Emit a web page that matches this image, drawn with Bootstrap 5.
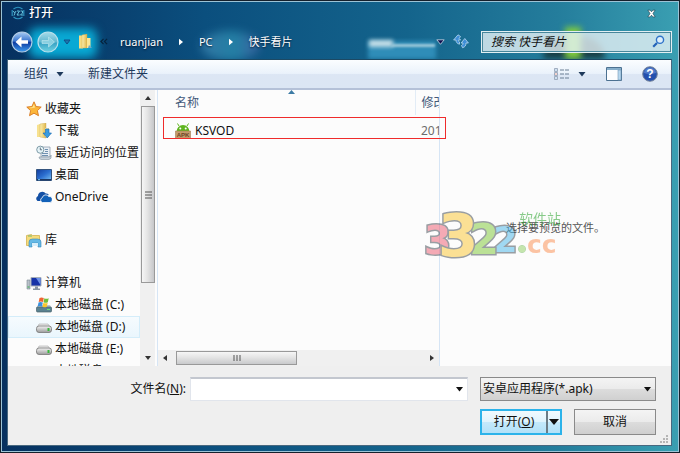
<!DOCTYPE html>
<html lang="zh-CN">
<head>
<meta charset="utf-8">
<meta name="viewport" content="width=device-width, initial-scale=1">
<title>打开</title>
<link href="https://cdn.jsdelivr.net/npm/bootstrap@5.3.0/dist/css/bootstrap.min.css" rel="stylesheet">
<style>
  body { font-family: "Noto Sans", "Noto Sans CJK SC", sans-serif; font-size: 12px; line-height: 16px; color: #111; background: #0b1420; }
  button, input, select { font: inherit; color: inherit; }
  svg { display: block; flex: none; }
  .plain { border: 0; background: none; padding: 0; }
  .dialog { border: 1px solid #15202c; background: linear-gradient(90deg, #06305f 0%, #0b4f7e 30%, #14648c 60%, #247d9c 82%, #3a9fb2 100%); }
  .frame { border: 1px solid #9cc3d6; padding: 0 6px 5px 5px; }
  .head { height: 57px; color: #fff; }
  .head > .layer { z-index: 1; }
  .title-row { height: 22px; }
  .title-row .name { font-size: 12px; font-weight: 500; text-shadow: 0 0 2px #02182f; }
  .path-row { height: 35px; }
  .crumb { color: #fff; font-size: 11px; text-decoration: none; text-shadow: 0 1px 2px #02182f; }
  .crumb-root { margin-left: 12px; }
  .glow { position: absolute; filter: blur(5px); }
  .glow-cyan { left: 22px; bottom: 1px; width: 68px; height: 30px; background: #08a9d4; border-radius: 8px; }
  .glow-ball { left: 194px; bottom: -2px; width: 58px; height: 30px; border-radius: 50%; background: linear-gradient(90deg, #4387b4, #2c93b4 60%, #5065ab); opacity: .7; }
  .glow-folder { left: 361px; bottom: 0; width: 68px; height: 18px; background: #2f8db8; filter: blur(2px); }
  .glow-tab { left: 362px; bottom: 12px; width: 24px; height: 7px; background: #c6dfe8; filter: blur(2px); }
  .glow-strip { left: 384px; bottom: 12px; width: 44px; height: 3px; background: #9cc7d8; filter: blur(1px); }
  .glow-dark { right: 67px; bottom: 0; width: 62px; height: 22px; background: #173e45; border-radius: 30px 30px 0 0; filter: blur(3px); }
  .glow-green { right: 91px; bottom: 0; width: 16px; height: 32px; background: #7fcb3e; filter: blur(3px); }
  .search { width: 191px; height: 22px; border: 1px solid #e2eff3; outline: 1px solid #47869b; outline-offset: -2px; background: rgba(231,242,246,.8); padding: 0 6px 0 9px; }
  .search input { border: 0; background: none; outline: 0; min-width: 0; color: #111; font-style: italic; padding: 0; }
  .search input::placeholder { color: #111; opacity: 1; }
  .inner { border: 1px solid #48687f; border-top-color: #1c4964; background: #efefef; }
  .tools { height: 30px; background: linear-gradient(#fbfdff 0, #eaf2fb 48%, #dce6f4 52%, #dbe6f4 100%); border-bottom: 2px solid #b4c1d8; color: #1e395b; padding: 0 13px 0 16px; gap: 20px; }
  .browse { background: #fcfcfc; flex: 1 1 0; min-height: 0; }
  .tree { width: 132px; padding-top: 8px; overflow: hidden; }
  .tree a { display: flex; align-items: center; gap: 3px; height: 22px; flex: none; padding-left: 27px; color: #111; text-decoration: none; white-space: nowrap; border: 1px solid transparent; }
  .tree a.group { padding-left: 17px; }
  .tree a.current { background: linear-gradient(#f6fbfe, #eaf6fd); border-color: #d4edfa; }
  .tree .space { height: 21px; flex: none; }
  .vbar { width: 17px; background: linear-gradient(90deg, #f0f0f0 15px, #fcfcfc 15px); padding: 0 2px 0 1px; }
  .vbar button, .hbar button { width: 14px; height: 16px; display: flex; align-items: center; justify-content: center; }
  .vthumb { height: 177px; border: 1px solid #999; background: linear-gradient(90deg, #f6f6f6, #e4e4e4 45%, #c6c7ca); }
  .vspace { flex: 1; }
  .files { width: 283px; border-left: 1px solid #d6e5f5; border-right: 1px solid #d6e5f5; }
  .scroller { flex: 1; overflow: hidden; }
  .files table { table-layout: fixed; width: 320px; }
  .files th { font-weight: 400; color: #43597a; height: 25px; padding: 0 6px 0 17px; }
  .files th + th, .files td + td { padding-left: 6px; }
  .files th + th { border-left: 1px solid #e2ecf6; }
  .files td { height: 32px; padding: 0 6px 0 17px; }
  .files td + td { color: #6d6d6d; }
  .sort { position: absolute; left: 130px; top: 0; }
  .marked { position: absolute; left: 5px; right: -7px; top: 27px; height: 22px; border: 1px solid #ef2b2b; z-index: 2; pointer-events: none; }
  .hbar { height: 16px; background: #f0f0f0; }
  .hthumb { width: 121px; height: 14px; border: 1px solid #999; background: linear-gradient(#f6f6f6, #e4e4e4 45%, #c9cacc); }
  .preview { color: #555; font-size: 11px; }
  .stamp { position: absolute; left: -18px; top: 112px; opacity: .5; pointer-events: none; }
  .foot { padding: 11px 15px 10px 16px; }
  .name-box { width: 278px; }
  .field { height: 24px; border: 1px solid #e1e5ec; border-top: 2px solid #c3c7cf; background: #fff; padding: 0 18px 0 4px; border-radius: 0; }
  .right-col { width: 176px; }
  .kind { height: 24px; appearance: none; border: 1px solid #8a8a8a; border-radius: 0; background: linear-gradient(#f4f4f4, #ebebeb 48%, #dcdcdc 52%, #d0d0d0); padding: 0 20px 0 2px; }
  .drop { position: absolute; right: 5px; top: 10px; pointer-events: none; }
  .act { height: 26px; }
  .accept { width: 82px; border: 2px solid #2cb3ea; background: linear-gradient(#f1fafe, #e0f4fd 48%, #c4e9fb 52%, #b2e1f8); }
  .accept .more { width: 14px; border-left: 2px solid #6b7c86; }
  .cancel { width: 82px; border: 1px solid #8a8a8a; background: linear-gradient(#f4f4f4, #ebebeb 48%, #dcdcdc 52%, #cfcfcf); }
  .grip { position: absolute; right: 2px; bottom: 1px; }
</style>
<script src="https://cdn.jsdelivr.net/npm/bootstrap@5.3.0/dist/js/bootstrap.bundle.min.js"></script>
</head>
<body>
<svg width="0" height="0" class="position-absolute" aria-hidden="true">
  <defs>
    <linearGradient id="gBlue" x2="0" y2="1"><stop stop-color="#a9cdf3"/><stop offset=".45" stop-color="#3b76cf"/><stop offset=".52" stop-color="#0c3aa0"/><stop offset="1" stop-color="#3d9df0"/></linearGradient>
    <linearGradient id="gTeal" x2="0" y2="1"><stop stop-color="#a7dbe9"/><stop offset=".5" stop-color="#5fb7d0"/><stop offset=".55" stop-color="#38a2c4"/><stop offset="1" stop-color="#71d4e4"/></linearGradient>
    <linearGradient id="gFolder"><stop stop-color="#fdf0ae"/><stop offset="1" stop-color="#dfb64c"/></linearGradient>
    <linearGradient id="gScreen" x2="1" y2="1"><stop stop-color="#123c9c"/><stop offset=".5" stop-color="#2b6ed0"/><stop offset="1" stop-color="#7cc2f4"/></linearGradient>
    <linearGradient id="gDisk" x2="0" y2="1"><stop stop-color="#f4f4f4"/><stop offset="1" stop-color="#9b9b9b"/></linearGradient>
    <symbol id="disk" viewBox="0 0 16 16"><path d="M3 5h9l3 4H1z" fill="#e9e9e9" stroke="#aaa" stroke-width=".6"/><rect x=".5" y="7" width="15" height="6.500" rx="2.500" fill="url(#gDisk)" stroke="#777" stroke-width=".8"/><rect x="11.500" y="9" width="2" height="3" fill="#39b83c"/></symbol>
  </defs>
</svg>

<div class="dialog min-vh-100 d-flex flex-column">
<div class="frame flex-grow-1 d-flex flex-column">
  <header class="head position-relative overflow-hidden">
    <span class="glow glow-cyan"></span><span class="glow glow-ball"></span><span class="glow glow-folder"></span><span class="glow glow-tab"></span><span class="glow glow-strip"></span><span class="glow glow-dark"></span><span class="glow glow-green"></span>
    <div class="layer position-relative title-row d-flex align-items-center ps-1 pe-3">
      <svg class="me-1" width="14" height="14" viewBox="0 0 13 14" fill="none" stroke="#2d92bd"><path d="M2 3Q6.500-.5 11 3M2 11q4.500 3.500 9 0M.7 4v6M12.300 4v6" stroke-width="1.200"/><path d="M1.800 5l1.400 2 1.400-2M3.500 7l-1 2.500M5.500 5H8L5.500 9H8M9 5h2v2L9 9h2.500" stroke="#65c2dc"/></svg>
      <span class="name flex-grow-1">打开</span>
      <button class="plain" type="button" aria-label="关闭"><svg width="9" height="9" viewBox="0 0 8 8"><path d="M.8 1h2l1.200 1.500L5.200 1h2L5.300 4l1.900 3h-2L4 5.500 2.800 7h-2l1.900-3z" fill="#fff" stroke="#183542" stroke-width=".5"/></svg></button>
    </div>
    <div class="layer position-relative path-row d-flex align-items-center ps-1">
      <button class="plain me-1" type="button" aria-label="后退"><svg width="22" height="22" viewBox="0 0 22 22"><circle cx="11" cy="11" r="10" fill="url(#gBlue)" stroke="#b4cde6" stroke-width="1.200"/><path d="M4.500 11l6-5.500v3.700H17v3.600h-6.500v3.700z" fill="#fff"/></svg></button>
      <button class="plain" type="button" aria-label="前进"><svg width="22" height="22" viewBox="0 0 22 22"><circle cx="11" cy="11" r="10" fill="url(#gTeal)" stroke="#b9e0ec" stroke-width="1.200"/><path d="M17.500 11l-6-5v3.500H5v3h6.500V16z" fill="#8bd0e1" stroke="#c2e9f0" stroke-width=".6"/></svg></button>
      <button class="plain ms-1 me-2" type="button" aria-label="最近的页面"><svg width="8" height="6" viewBox="0 0 8 6"><path d="M1 1h6L4 5z" fill="#1d78ad" stroke="#104f8c"/></svg></button>
      <svg width="13" height="15" viewBox="0 0 13 15"><path d="M0 1.500h4v13H0z" fill="#f6dd83"/><path d="M3 1l5-1v14H3z" fill="url(#gFolder)" stroke="#caa245" stroke-width=".4"/><path d="M8 4h3.500v10H8z" fill="#fbe697"/><path d="M10 11l3 3H9z" fill="#6fa5c7"/></svg>
      <svg class="ms-2" width="8" height="7" viewBox="0 0 9 8" fill="none" stroke="#06233d" stroke-width="1.400"><path d="M4 1L1 4l3 3M8 1L5 4l3 3"/></svg>
      <a class="crumb crumb-root" href="#">ruanjian</a>
      <svg class="mx-3" width="4" height="8" viewBox="0 0 5 8"><path d="M0 0l5 4-5 4z" fill="#fff"/></svg>
      <a class="crumb" href="#">PC</a>
      <svg class="mx-3" width="4" height="8" viewBox="0 0 5 8"><path d="M0 0l5 4-5 4z" fill="#fff"/></svg>
      <a class="crumb flex-grow-1" href="#">快手看片</a>
      <button class="plain me-2" type="button" aria-label="以前的位置"><svg width="9" height="6" viewBox="0 0 9 6"><path d="M.8.800h7.400L4.500 5.300z" fill="#10104f" stroke="#c9deea" stroke-width=".8"/></svg></button>
      <button class="plain me-2 pe-1" type="button" aria-label="刷新"><svg width="16" height="15" viewBox="0 0 16 15" fill="#3f8fd8" stroke="#b9d8f0" stroke-width=".8"><path d="M5 .8L.6 6H3c0 2.200 1 3.600 3.500 4.200V8C5.500 7.500 5.400 7 5.400 6h2.200L6.200 4.500 7.500 2.500z"/><path d="M11.800 4.500L8.200 9H10c0 1.500-.5 2-1.500 2.500l1 2.200c2.500-.5 3.500-2.200 3.500-4.700h2.400z"/></svg></button>
      <label class="search d-flex align-items-center"><input class="flex-grow-1" type="search" placeholder="搜索 快手看片" aria-label="搜索 快手看片"><svg width="13" height="13" viewBox="0 0 13 13" fill="none"><path d="M5 8L1.200 11.800" stroke="#2463b8" stroke-width="2.200"/><circle cx="8" cy="4.800" r="3.600" fill="#dceefa" stroke="#2f73c9" stroke-width="1.400"/></svg></label>
    </div>
  </header>

  <main class="inner flex-grow-1 d-flex flex-column">
    <div class="tools d-flex align-items-center">
      <button class="plain d-flex align-items-center gap-1 me-1" type="button">组织<svg class="ms-1" width="8" height="5" viewBox="0 0 7 5"><path d="M0 0h7L3.500 4.500z" fill="#1e395b"/></svg></button>
      <button class="plain me-auto" type="button">新建文件夹</button>
      <button class="plain d-flex align-items-center gap-2" type="button" aria-label="更改视图"><svg width="16" height="12" viewBox="0 0 16 12"><g fill="#fff" stroke="#8a9bb0" stroke-width=".8"><path d="M.5.500h3v3h-3zM.5 4.500h3v3h-3zM.5 8.500h3v3h-3z"/></g><path d="M1.500 2h1M1.500 10h1" stroke="#3c87c8"/><path d="M1.500 6h1" stroke="#d24a36"/><path d="M6 2h4m1 0h4M6 6h4m1 0h4M6 10h4m1 0h4" stroke="#6b7e94"/></svg><svg width="8" height="5" viewBox="0 0 7 5"><path d="M0 0h7L3.500 4.500z" fill="#1e395b"/></svg></button>
      <button class="plain" type="button" aria-label="预览窗格"><svg width="16" height="14" viewBox="0 0 16 14"><path d="M.5.500h15v13H.5z" fill="#fcfdff" stroke="#4c7191"/><path d="M1 1h14v2H1z" fill="#86aecb"/><path d="M12 3h3v10h-3z" fill="#b7d7ef" stroke="#7398b5" stroke-width=".6"/></svg></button>
      <button class="plain" type="button" aria-label="帮助"><svg width="16" height="16" viewBox="0 0 16 16"><circle cx="8" cy="8" r="7.300" fill="#2450ae" stroke="#76859b"/><path d="M2 7a6 5.500 0 0112 0q-6 2-12 0" fill="#638cd4" opacity=".7"/><text x="8" y="12.300" text-anchor="middle" font-family="Liberation Sans" font-weight="700" font-size="12" fill="#fff">?</text></svg></button>
    </div>

    <div class="browse d-flex overflow-hidden">
      <nav class="tree d-flex flex-column" aria-label="导航窗格">
        <a class="group" href="#"><svg width="16" height="16" viewBox="0 0 16 16"><path d="M8 .8l2.100 4.700 5.100.6-3.800 3.500 1.100 5.100L8 12.200l-4.500 2.500 1.100-5.100L.8 6.100l5.100-.6z" fill="#fbb63a" stroke="#d87820" stroke-width=".9"/><path d="M8 3l1 3.500-4 .8L3 6.800l3.500-.5z" fill="#ffe692"/></svg>收藏夹</a>
        <a href="#"><svg width="16" height="16" viewBox="0 0 16 16"><path d="M1 2l3-1v13H1z" fill="#f7e18f"/><path d="M4 1l6-1v15l-6-1z" fill="url(#gFolder)" stroke="#c7a349" stroke-width=".4"/><path d="M9 5h4v9H9z" fill="#f6e6a9"/><path d="M9.500 6h3.500v4h2.500l-4.300 5L7 10h2.500z" fill="#389be0" stroke="#1467ae" stroke-width=".6"/></svg>下载</a>
        <a href="#"><svg width="16" height="16" viewBox="0 0 16 16"><path d="M5 2h9v10H5z" fill="#e9eff5" stroke="#8fa0ad" stroke-width=".8"/><path d="M3 12h10q2 0 2-2 1 4-2 4.500H5Q3 14 3 12z" fill="#c8d2db" stroke="#8595a1" stroke-width=".6"/><path d="M9 4.500h3M9 6.500h3M6 8.500h6M6 10.500h6" stroke="#6f91b0"/><circle cx="4.300" cy="4.700" r="3.600" fill="#e6f4f8" stroke="#73919e" stroke-width=".9"/><path d="M4.300 2.500v2.300H6" stroke="#456" fill="none" stroke-width=".8"/></svg>最近访问的位置</a>
        <a href="#"><svg width="16" height="14" viewBox="0 0 16 14"><path d="M.5 1.500h15v11H.5z" fill="url(#gScreen)" stroke="#34547e"/><path d="M1 11h14v1.500H1z" fill="#1c3865"/><path d="M2 11.700h2" stroke="#79d0ff"/></svg>桌面</a>
        <a href="#"><svg width="16" height="12" viewBox="0 0 16 12"><path d="M1.500 10A2.800 2.800 0 012 5a4.300 4.300 0 017.800-2.400 3.500 3.500 0 013 1.200L6 10z" fill="#1450a5"/><path d="M6.500 11.500a2.500 2.500 0 01-.2-4.800 3.500 3.500 0 016.400-1.200A3 3 0 0114 11.500z" fill="#1261b8" stroke="#fcfcfc" stroke-width=".8"/></svg>OneDrive</a>
        <span class="space"></span>
        <a class="group" href="#"><svg width="16" height="15" viewBox="0 0 16 15"><path d="M.5 2.500l5-1 1 1h7v10H.5z" fill="#f5dc7b" stroke="#cfa944" stroke-width=".7"/><path d="M2 3h4" stroke="#7bb76a"/><path d="M3 14V9q0-3 3.500-3h5Q15 6 15 9v5h-3v-4H6v4z" fill="#65b9e6" stroke="#3587b9" stroke-width=".6"/><path d="M6 10h6v3H6z" fill="#d7eefa"/></svg>库</a>
        <span class="space"></span>
        <a class="group" href="#"><svg width="16" height="15" viewBox="0 0 16 15"><path d="M1 4h3v9H1z" fill="#b9c1c9" stroke="#7b8791" stroke-width=".6"/><path d="M1.500 11h2" stroke="#3bb24c"/><path d="M5 1.500h10v8.500H5z" fill="#1733a8" stroke="#a6aeb8"/><path d="M10 2h4.500v7z" fill="#6d92e8"/><path d="M9 10.500h3v2h2v1.500H7v-1.500h2z" fill="#8996a5"/></svg>计算机</a>
        <a href="#"><svg width="16" height="16" viewBox="0 0 16 16"><path d="M2 8h12l1.500 3H.5z" fill="#bec7cd"/><rect x=".5" y="10" width="15" height="5" rx="1" fill="#5b8290" stroke="#48626c" stroke-width=".7"/><path d="M11 12.500h3" stroke="#6ce073"/><path d="M3.500 1q2-1 4.300 0L7 5q-2-1-4.300 0z" fill="#ee6531"/><path d="M8.400 1.200q2 1 4.300 0l-.9 4q-2 1-4.300 0z" fill="#73bd37"/><path d="M2.500 5.500q2-1 4.300 0L6 9.500q-2-1-4.300 0z" fill="#3b91dd"/><path d="M7.400 5.800q2 1 4.300 0l-.9 4q-2 1-4.300 0z" fill="#f9c72e"/></svg>本地磁盘 (C:)</a>
        <a class="current" href="#" aria-current="true"><svg width="16" height="16"><use href="#disk"/></svg>本地磁盘 (D:)</a>
        <a href="#"><svg width="16" height="16"><use href="#disk"/></svg>本地磁盘 (E:)</a>
        <a href="#"><svg width="16" height="16"><use href="#disk"/></svg>本地磁盘 (F:)</a>
      </nav>
      <div class="vbar d-flex flex-column">
        <button class="plain" type="button" aria-label="向上滚动"><svg width="6" height="4" viewBox="0 0 6 4"><path d="M0 4h6L3 0z" fill="#333"/></svg></button>
        <div class="vthumb d-flex align-items-center justify-content-center"><svg width="7" height="8" viewBox="0 0 7 8"><path d="M0 1h7M0 4h7M0 7h7" stroke="#555"/></svg></div>
        <span class="vspace"></span>
        <button class="plain" type="button" aria-label="向下滚动"><svg width="6" height="4" viewBox="0 0 6 4"><path d="M0 0h6L3 4z" fill="#333"/></svg></button>
      </div>

      <section class="files position-relative d-flex flex-column">
        <svg class="sort" width="7" height="4" viewBox="0 0 7 4"><path d="M0 4h7L3.500 0z" fill="#3d7ba5"/></svg>
        <div class="scroller">
          <table>
            <colgroup><col style="width:257px"><col></colgroup>
            <thead><tr><th scope="col">名称</th><th scope="col">修改日期</th></tr></thead>
            <tbody><tr><td><span class="d-flex align-items-center gap-1"><svg width="16" height="16" viewBox="0 0 16 16"><path d="M1.500 9a6.500 7 0 0113 0z" fill="#5fb51f"/><path d="M4 3L2.500.5M12 3L13.500.5" stroke="#5fb51f"/><circle cx="5.300" cy="5.500" r="1" fill="#fff"/><circle cx="10.700" cy="5.500" r="1" fill="#fff"/><path d="M.5 8h15v7.500H.5z" fill="#c39a6c" stroke="#a57c52" stroke-width=".6"/><text x="8" y="14" text-anchor="middle" font-family="Liberation Sans" font-size="6" font-weight="700" fill="#6b4626">APK</text></svg>KSVOD</span></td><td>2015</td></tr></tbody>
          </table>
        </div>
        <div class="marked"></div>
        <div class="hbar d-flex align-items-center">
          <button class="plain me-1" type="button" aria-label="向左滚动"><svg width="4" height="6" viewBox="0 0 4 6"><path d="M4 0v6L0 3z" fill="#333"/></svg></button>
          <div class="hthumb d-flex align-items-center justify-content-center"><svg width="8" height="6" viewBox="0 0 8 6"><path d="M1 0v6M4 0v6M7 0v6" stroke="#555"/></svg></div>
          <button class="plain ms-auto" type="button" aria-label="向右滚动"><svg width="4" height="6" viewBox="0 0 4 6"><path d="M0 0v6l4-3z" fill="#333"/></svg></button>
        </div>
      </section>

      <section class="preview position-relative flex-grow-1 d-flex align-items-center justify-content-center">
        <span>选择要预览的文件。</span>
        <svg class="stamp" width="142" height="60" viewBox="0 0 142 60" font-family="DejaVu Sans" font-weight="700" stroke-linejoin="miter" paint-order="stroke" aria-hidden="true">
          <g stroke="#39434c" stroke-width="3">
            <text x="2" y="52" font-size="39" fill="#ee5b70">3</text>
            <text x="71" y="50" font-size="35" fill="#47b5ea">2</text>
            <text x="47" y="52" font-size="43" fill="#7cc832">2</text>
            <text x="16" y="54" font-size="58" fill="#fbc52e">3</text>
          </g>
          <circle cx="100" cy="47" r="3.500" fill="#8dcf60" stroke="#4b9b42"/>
          <text x="105" y="51" font-size="25" fill="#fb8b4c">cc</text>
          <text x="97" y="22" font-size="14" font-family="Noto Sans CJK SC" font-weight="400" fill="#159a18">软件站</text>
        </svg>
      </section>
    </div>

    <form class="foot position-relative d-flex flex-column gap-2">
      <div class="d-flex align-items-center justify-content-end">
        <label class="me-1" for="fileName">文件名(<u>N</u>):</label>
        <div class="name-box position-relative me-2">
          <input class="field w-100" id="fileName" type="text">
          <svg class="drop" width="7" height="5" viewBox="0 0 7 5"><path d="M0 0h7L3.500 4.500z" fill="#111"/></svg>
        </div>
        <div class="right-col position-relative ms-1">
          <select class="kind w-100" aria-label="文件类型"><option>安卓应用程序(*.apk)</option></select>
          <svg class="drop" width="7" height="5" viewBox="0 0 7 5"><path d="M0 0h7L3.500 4.500z" fill="#111"/></svg>
        </div>
      </div>
      <div class="right-col d-flex justify-content-between align-self-end">
        <div class="act accept d-flex">
          <button class="plain flex-grow-1" type="submit">打开(<u>O</u>)</button>
          <button class="plain more d-flex align-items-center justify-content-center" type="button" aria-label="打开选项"><svg width="10" height="6" viewBox="0 0 10 6"><path d="M0 0h10L5 6z" fill="#111"/></svg></button>
        </div>
        <button class="act cancel" type="button">取消</button>
      </div>
      <svg class="grip" width="9" height="9" viewBox="0 0 9 9" fill="#b5b5b5"><path d="M6 0h2v2H6zM6 3h2v2H6zM6 6h2v2H6zM3 3h2v2H3zM3 6h2v2H3zM0 6h2v2H0z"/></svg>
    </form>
  </main>
</div>
</div>
</body>
</html>
